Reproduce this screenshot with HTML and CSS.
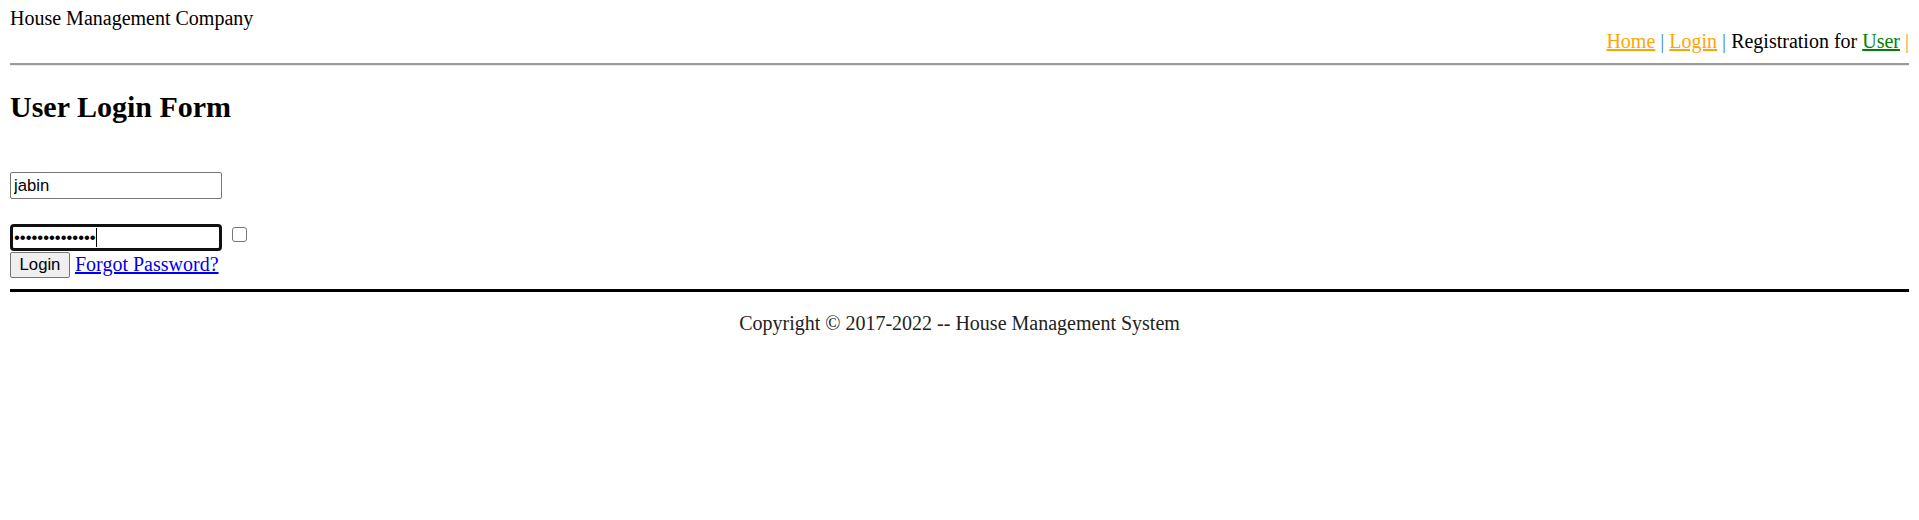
FILE: index.html
```html
<!DOCTYPE html>
<html lang="en">
<head>
<meta charset="utf-8">
<title>User Login</title>
<link rel="stylesheet" href="styles.css">
</head>
<body>
<header class="site-header">
  <div class="brand">House Management Company</div>
  <nav class="nav"><a class="nav-link" href="#">Home</a> <span class="sep">|</span> <a class="nav-link" href="#">Login</a> <span class="sep">|</span> Registration for <a class="nav-user" href="#">User</a> <span class="sep sep-last">|</span></nav>
</header>
<hr class="rule">
<main class="content">
  <h2 class="title">User Login Form</h2>
  <form class="login-form">
    <div class="row row-text"><input class="field" type="text" value="jabin"></div>
    <div class="row row-pass">
      <span class="field-wrap"><input class="field field-focus" type="password" value="jabinpassword1"><span class="caret"></span></span>
      <input class="check" type="checkbox">
    </div>
    <div class="row row-submit"><button class="btn" type="button">Login</button><a class="forgot" href="#">Forgot Password?</a></div>
  </form>
</main>
<hr class="rule-thick">
<footer class="footer">Copyright © 2017-2022 -- House Management System</footer>
</body>
</html>
```
FILE: styles.css
```css
html, body {
  background: #fff;
}
body {
  margin: 7px 10px 10px;
  font-family: "Liberation Serif", "Times New Roman", serif;
  font-size: 20px;
  line-height: 23px;
  color: #000;
}
.brand {
  height: 23px;
}
.nav {
  text-align: right;
  height: 23px;
}
.nav-link {
  color: #ffa500;
}
.nav-user {
  color: #008000;
}
.sep {
  color: #4a80c8;
}
.sep-last {
  color: #e0a050;
}
.rule {
  margin: 10px 0 0;
  height: 0;
  border: 0;
  border-top: 2px solid #9a9a9a;
  border-bottom: 1px solid #ececec;
}
.title {
  margin: 23px 0 26px;
  font-size: 30px;
  line-height: 35px;
  font-weight: bold;
}
.login-form {
  margin: 0;
  padding-top: 22px;
}
.row {
  display: flex;
  align-items: flex-start;
}
.row-pass {
  margin-top: 25px;
}
.row-submit {
  margin-top: 1px;
}
.field {
  display: block;
  box-sizing: border-box;
  width: 212px;
  height: 27px;
  margin: 0;
  padding: 0 3px;
  border: 1px solid #767676;
  border-radius: 2px;
  background: #fff;
  color: #000;
  font-family: "Liberation Sans", Arial, sans-serif;
  font-size: 16.6667px;
}
.field-wrap {
  position: relative;
  display: block;
}
.field-focus {
  border: 3px solid #101010;
  border-radius: 4px;
  padding: 0 1px;
  outline: none;
}
.caret {
  position: absolute;
  left: 86px;
  top: 4px;
  width: 1px;
  height: 19px;
  background: #000;
}
.check {
  appearance: none;
  -webkit-appearance: none;
  box-sizing: border-box;
  width: 15px;
  height: 15px;
  margin: 3px 0 0 10px;
  border: 1px solid #767676;
  border-radius: 3px;
  background: #fff;
}
.btn {
  box-sizing: border-box;
  width: 60px;
  height: 26px;
  margin: 0;
  padding: 0;
  border: 1px solid #767676;
  border-radius: 2px;
  background: #efefef;
  color: #000;
  font-family: "Liberation Sans", Arial, sans-serif;
  font-size: 16.6667px;
}
.forgot {
  margin: 1px 0 0 5px;
  color: #0000ee;
}
.rule-thick {
  margin: 11px 0 0;
  height: 3px;
  border: 0;
  background: #000;
}
.footer {
  margin-top: 20px;
  text-align: center;
  color: #222;
}
```
